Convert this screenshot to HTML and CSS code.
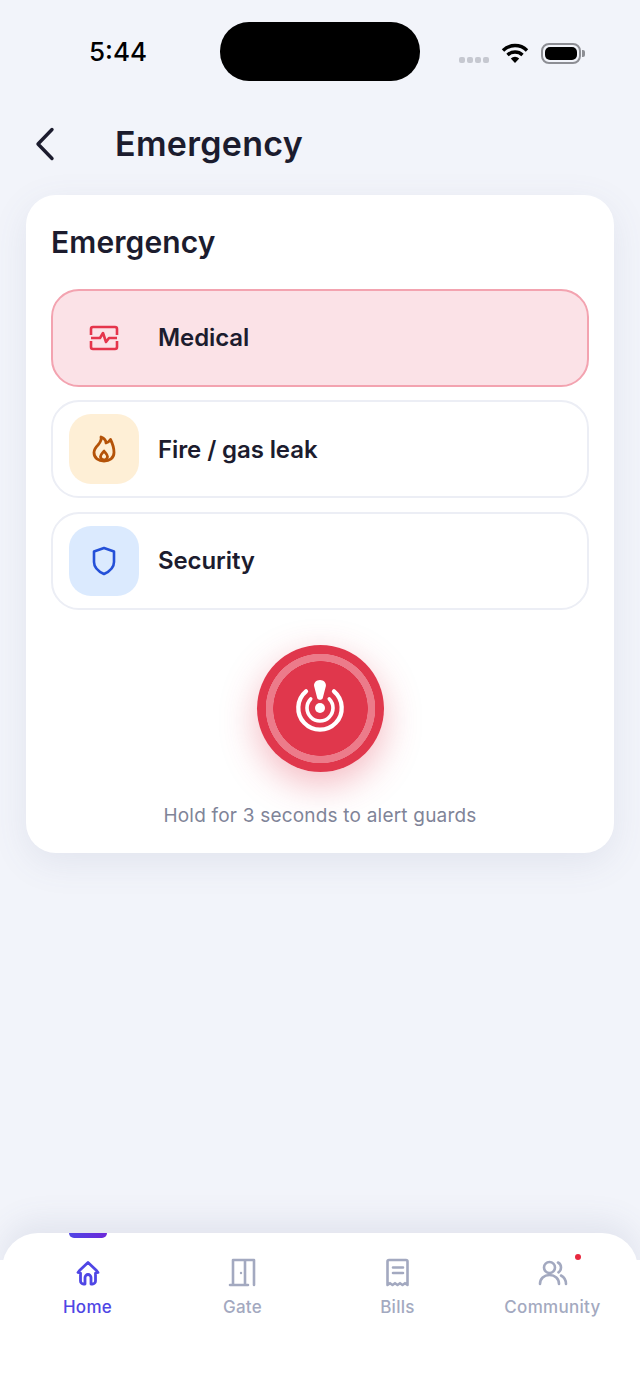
FILE: index.html
```html
<!DOCTYPE html>
<html lang="en">
  <head>
    <meta charset="UTF-8" />
    <title>Emergency</title>
    <link rel="stylesheet" href="styles.css">
  </head>
  <body>
    <div class="page">
      <header class="status">
        <span class="time">5:44</span>
        <div class="island"></div>
        <div class="status-icons">
          <div class="signal"><i></i><i></i><i></i><i></i></div>
          <svg class="wifi" width="28" height="22" viewBox="0 0 28 22">
            <path d="M2 8.500a17 17 0 0 1 24 0M6.500 13a11 11 0 0 1 15 0" fill="none" stroke="#000" stroke-width="3.400" />
            <path d="M9.800 16.400a6 6 0 0 1 8.400 0L14 21z" fill="#000" />
          </svg>
          <div class="battery"><div class="battery-fill"></div></div>
          <div class="battery-cap"></div>
        </div>
      </header>

      <div class="topbar">
        <svg class="back" width="20" height="34" viewBox="0 0 20 34">
          <path d="M17 2.500 3 17l14 14.500" fill="none" stroke="#1c1c2e" stroke-width="3.400" stroke-linecap="round" stroke-linejoin="round" />
        </svg>
        <h1 class="title">Emergency</h1>
      </div>

      <main class="card">
        <h2 class="card-title">Emergency</h2>
        <div class="rows">
          <div class="row row-active">
            <div class="row-icon">
              <svg width="30" height="28" viewBox="0 0 30 28" fill="none" stroke="#e5354c" stroke-width="2.600" stroke-linejoin="round">
                <path d="M2 11V5a2 2 0 0 1 2-2h22a2 2 0 0 1 2 2v6" />
                <path d="M2 17v6a2 2 0 0 0 2 2h22a2 2 0 0 0 2-2v-6" />
                <path d="M2 14h9l3-5 3 9 3-4h8" />
              </svg>
            </div>
            <span class="row-label">Medical</span>
          </div>
          <div class="row">
            <div class="row-icon icon-fire">
              <svg width="24" height="28" viewBox="0 0 24 28" fill="none" stroke="#b45309" stroke-width="2.800" stroke-linejoin="round">
                <path d="M9 2c1 3-.5 5-3 8C3.500 12.500 2 15 2 17.500 2 23 6.500 26 12 26s10-3 10-8.500c0-5-1.500-9-3.500-13-1 1.500-2.500 3-4.500 3.500C14 5 11.500 3 9 2z" />
                <path d="M12 16c-1.500 2-3.500 3.500-3.500 5.500a3.500 3.500 0 0 0 7 0c0-2-2-3.500-3.500-5.500z" />
              </svg>
            </div>
            <span class="row-label">Fire / gas leak</span>
          </div>
          <div class="row">
            <div class="row-icon icon-shield">
              <svg width="24" height="30" viewBox="0 0 24 30" fill="none" stroke="#2450d8" stroke-width="2.600" stroke-linejoin="round">
                <path d="M12 2 2 5.500V16c0 5.500 4.500 9.500 10 12 5.500-2.500 10-6.500 10-12V5.500z" />
              </svg>
            </div>
            <span class="row-label">Security</span>
          </div>
        </div>

        <div class="sos">
          <div class="sos-ring">
            <svg width="60" height="60" viewBox="0 0 60 60" fill="none" stroke="#fff" stroke-linecap="round">
              <path d="M16 13.400A21.700 21.700 0 1 0 44 13.400" stroke-width="4.300" />
              <path d="M20.700 20.900A13 13 0 1 0 39.300 20.900" stroke-width="3.600" />
              <circle cx="30" cy="30" r="5" fill="#fff" stroke="none" />
              <path d="M30 2c3.800 0 6.300 2.800 5.900 6L32.800 20c-.4 2.400-5.200 2.400-5.600 0L24.100 8C23.700 4.800 26.200 2 30 2z" fill="#fff" stroke="none" />
            </svg>
          </div>
        </div>
        <p class="hint">Hold for 3 seconds to alert guards</p>
      </main>

      <nav class="tabbar">
        <div class="tab tab-active">
          <div class="tab-marker"></div>
          <svg width="28" height="28" viewBox="0 0 28 28" fill="none" stroke="#4f46e5" stroke-width="2.800" stroke-linejoin="round">
            <path d="M14 2.500 5.500 10.500 4 12.500l2.500.5v8a3 3 0 0 0 3 3H11v-6.500a3 3 0 0 1 6 0V24h1.500a3 3 0 0 0 3-3v-8l2.500-.5-1.500-2z" />
          </svg>
          <span class="tab-label">Home</span>
        </div>
        <div class="tab">
          <svg width="30" height="30" viewBox="0 0 30 30" fill="none" stroke="#a3a9c0" stroke-width="2.600" stroke-linecap="round" stroke-linejoin="round">
            <path d="M5 27V2h21v25M17 2v25M2 27h18" />
            <circle cx="13" cy="15" r="1.200" fill="#a3a9c0" stroke="none" />
          </svg>
          <span class="tab-label">Gate</span>
        </div>
        <div class="tab">
          <svg width="30" height="30" viewBox="0 0 30 30" fill="none" stroke="#a3a9c0" stroke-width="2.600" stroke-linejoin="round">
            <path d="M4.500 3.500A1.500 1.500 0 0 1 6 2h17a1.500 1.500 0 0 1 1.500 1.500V27l-2.500-1.800-2.500 1.800-2.500-1.800-2.500 1.800-2.500-1.800L9.500 27 7 25.200 4.500 27z" />
            <path d="M10 9.500h10M10 15h10" stroke-linecap="round" />
          </svg>
          <span class="tab-label">Bills</span>
        </div>
        <div class="tab">
          <svg width="30" height="30" viewBox="0 0 30 30" fill="none" stroke="#a3a9c0" stroke-width="2.600" stroke-linecap="round">
            <circle cx="11.500" cy="9.500" r="5.500" />
            <path d="M2 26c0-5.500 4-9 9.500-9s9.500 3.500 9.500 9" />
            <path d="M20 4.500c2 1 3 3 3 5s-1 3.800-2.500 4.800M23 17.500c2.700 1.500 5 4.500 5 8.500" />
          </svg>
          <span class="tab-label">Community</span>
          <div class="tab-dot"></div>
        </div>
      </nav>
    </div>
  </body>
</html>
```

FILE: styles.css
```css
* {
  box-sizing: border-box;
}
body {
  margin: 0;
  font-family: "Inter", sans-serif;
  background-color: #f2f4fa;
  color: #1c1c2e;
}
.page {
  height: 1391px;
  display: flex;
  flex-direction: column;
  overflow: hidden;
}
.status {
  height: 104px;
  padding: 22px 0 0 89px;
  display: flex;
  align-items: flex-start;
}
.time {
  width: 131px;
  flex: none;
  margin-top: 14px;
  font-size: 26px;
  line-height: 32px;
  font-weight: 500;
  color: #000;
}
.island {
  width: 200px;
  height: 59px;
  flex: none;
  border-radius: 29px;
  background: #000;
}
.status-icons {
  margin-left: 39px;
  margin-top: 20px;
  display: flex;
  align-items: center;
}
.signal {
  display: flex;
  gap: 2px;
  margin-top: 14px;
  margin-right: 12px;
}
.signal i {
  width: 6px;
  height: 6px;
  border-radius: 2px;
  background: #c6c8d0;
}
.wifi {
  margin-right: 12px;
}
.battery {
  width: 40px;
  height: 21px;
  padding: 2px;
  border: 2px solid #8d8e94;
  border-radius: 8px;
}
.battery-fill {
  width: 100%;
  height: 100%;
  background: #000;
  border-radius: 5px;
}
.battery-cap {
  width: 3px;
  height: 7px;
  margin-left: 1px;
  border-radius: 0 2px 2px 0;
  background: #8d8e94;
}
.topbar {
  height: 80px;
  padding: 0 0 0 35px;
  display: flex;
  align-items: center;
  gap: 60px;
}
.title {
  margin: 0;
  font-size: 34px;
  line-height: 80px;
  font-weight: 600;
  letter-spacing: 0.3px;
}
.card {
  margin: 11px 26px 0;
  height: 658px;
  padding: 27px 25px 0;
  background: #fff;
  border-radius: 30px;
  box-shadow: 0 10px 36px rgba(90, 96, 140, 0.1);
}
.card-title {
  margin: 0 0 26.500px;
  font-size: 30px;
  line-height: 40px;
  font-weight: 600;
  letter-spacing: 0.1px;
}
.rows {
  display: flex;
  flex-direction: column;
  gap: 13.500px;
}
.row {
  height: 98px;
  padding: 0 16px;
  display: flex;
  align-items: center;
  gap: 19px;
  border: 2px solid #eceef5;
  border-radius: 28px;
}
.row-active {
  background: #fbe2e7;
  border-color: #f3a3b0;
}
.row-icon {
  width: 70px;
  height: 70px;
  flex: none;
  display: flex;
  align-items: center;
  justify-content: center;
  border-radius: 22px;
}
.icon-fire {
  background: #feefd6;
}
.icon-shield {
  background: #dbeafe;
}
.row-label {
  font-size: 24px;
  font-weight: 600;
  letter-spacing: -0.1px;
}
.sos {
  margin-top: 35px;
  display: flex;
  justify-content: center;
}
.sos-ring {
  width: 127px;
  height: 127px;
  display: flex;
  align-items: center;
  justify-content: center;
  border-radius: 50%;
  background:
    radial-gradient(circle, #e0374c 0 47px, #ec7b8a 47.500px 54.500px, #e0374c 55px);
  box-shadow: 0 12px 36px rgba(224, 55, 76, 0.35);
}
.hint {
  margin: 31.500px 0 0;
  text-align: center;
  font-size: 19px;
  line-height: 26px;
  letter-spacing: 0.2px;
  color: #7f8498;
}
.tabbar {
  margin: auto 2px 0;
  height: 158px;
  position: relative;
  display: flex;
  padding: 0 8px;
  background: #fff;
  border-radius: 36px 36px 0 0;
  box-shadow: 0 -12px 30px rgba(90, 96, 140, 0.1);
}
.tabbar::after {
  content: "";
  position: absolute;
  left: -2px;
  right: -2px;
  top: 27px;
  bottom: 0;
  background: #fff;
}
.tab {
  flex: 1;
  padding-top: 25px;
  position: relative;
  z-index: 1;
  display: flex;
  flex-direction: column;
  align-items: center;
  gap: 8px;
  color: #a3a9c0;
}
.tab-active {
  padding-top: 0;
  color: #4f46e5;
}
.tab-marker {
  width: 38px;
  height: 5px;
  margin-bottom: 14px;
  border-radius: 0 0 5px 5px;
  background: linear-gradient(90deg, #4f46e5, #6d28d9);
}
.tab-label {
  font-size: 17px;
  line-height: 22px;
  font-weight: 500;
  letter-spacing: 0.3px;
}
.tab-dot {
  position: absolute;
  top: 21px;
  left: 100px;
  width: 6px;
  height: 6px;
  border-radius: 50%;
  background: #e8283f;
}
```
